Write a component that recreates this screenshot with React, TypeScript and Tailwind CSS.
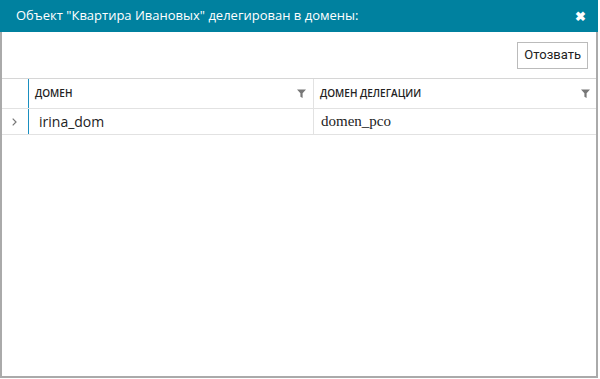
function Funnel() {
  return (
    <svg width="9" height="9" viewBox="0 0 9 9" className="shrink-0">
      <path d="M0 0.5h9L5.6 4.2V9L3.4 7.8V4.2z" fill="#777" />
    </svg>
  );
}

function Chevron() {
  return (
    <svg width="5" height="8" viewBox="0 0 5 8">
      <path d="M0.7 0.7L4 4L0.7 7.3" fill="none" stroke="#777" strokeWidth="1.2" />
    </svg>
  );
}

const rows = [{ domain: "irina_dom", target: "domen_pco" }];

export default function App() {
  return (
    <div className="h-[379px] w-[600px] overflow-hidden bg-white font-['Open_Sans',sans-serif]">
      <div className="flex h-[378px] w-[598px] flex-col border-x-2 border-b-2 border-l-[#aaa] border-r-[#aaa] border-b-[#aaa] border-t-0">
        <div className="-mx-[2px] flex h-[32px] shrink-0 items-center justify-between bg-[#00819f] pl-[16px] pr-[12px] text-[13px] text-white">
          <span>Объект "Квартира Ивановых" делегирован в домены:</span>
          <span className="text-[13px] font-bold leading-none">✖</span>
        </div>

        <div className="flex h-[46px] shrink-0 items-center justify-end pr-[8px]">
          <button className="h-[27px] border border-[#bbb] bg-white px-[6px] font-['Roboto',sans-serif] text-[13px] text-[#222]">
            Отозвать
          </button>
        </div>

        <div className="border-t border-[#d6d6d6]">
          <div className="flex h-[30px] border-b border-[#e2e2e2] text-[10px] font-semibold uppercase text-[#222]">
            <div className="w-[27px] shrink-0 border-r border-[#1a8fc0]" />
            <div className="flex w-[285px] items-center justify-between border-r border-[#e2e2e2] pl-[6px] pr-[7px]">
              <span>Домен</span>
              <Funnel />
            </div>
            <div className="flex flex-1 items-center justify-between pl-[6px] pr-[6px]">
              <span>Домен делегации</span>
              <Funnel />
            </div>
          </div>
          {rows.map((r) => (
            <div key={r.domain} className="flex h-[26px] border-b border-[#e2e2e2] text-[#222]">
              <div className="flex w-[27px] shrink-0 items-center justify-center border-r border-[#1a8fc0] pr-[2px]">
                <Chevron />
              </div>
              <div className="flex w-[285px] items-center border-r border-[#e2e2e2] pl-[10px] text-[14px]">
                {r.domain}
              </div>
              <div className="flex flex-1 items-center pl-[7px] font-['Liberation_Serif',serif] text-[15px]">
                {r.target}
              </div>
            </div>
          ))}
        </div>
      </div>
    </div>
  );
}
